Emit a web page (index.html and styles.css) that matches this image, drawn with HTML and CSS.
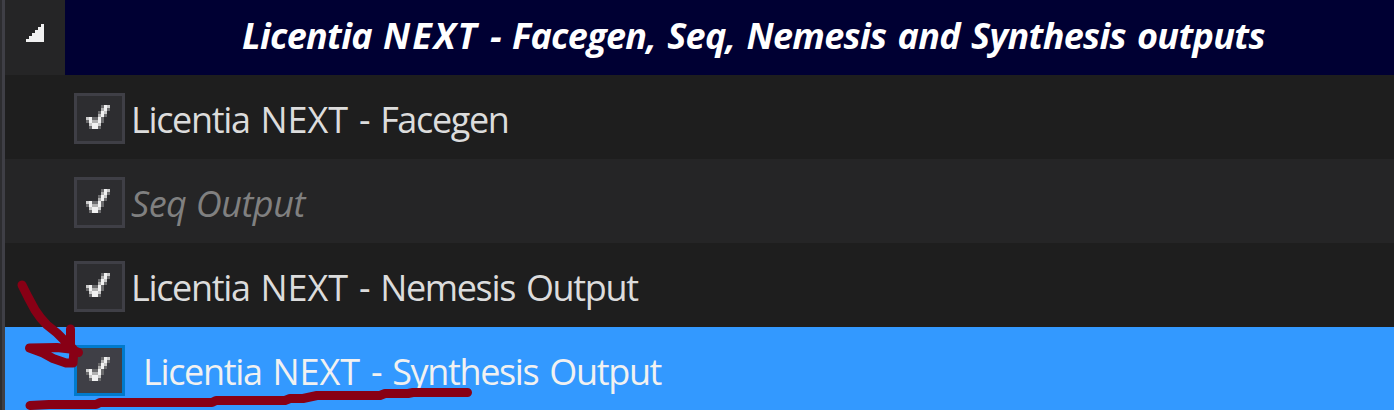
FILE: index.html
```
<!DOCTYPE html>
<html lang="en">
<head>
<meta charset="utf-8">
<title>Outputs</title>
<link rel="stylesheet" href="styles.css">
</head>
<body>
<svg class="defs" width="0" height="0" aria-hidden="true">
  <symbol id="check" viewBox="0 0 8 8" shape-rendering="crispEdges">
    <path fill="#f1f1f1" d="M6 0h1v2h-1zM5 2h1v2h-1zM1 4h1v2h-1zM4 4h1v2h-1zM2 6h2v2h-2z"/>
    <path fill="#c9c9c9" d="M7 0h1v1h-1zM6 2h1v1h-1zM0 4h1v1h-1zM1 6h1v1h-1zM4 6h1v1h-1z"/>
    <path fill="#b0b0b0" d="M5 1h1v1h-1zM4 3h1v1h-1zM2 5h2v1h-2z"/>
    <path fill="#6b6b6d" d="M5 0h1v1h-1zM7 1h1v1h-1zM4 2h1v1h-1zM6 3h1v1h-1zM2 4h2v1h-2zM5 4h1v1h-1zM0 5h1v1h-1zM5 5h1v1h-1zM1 7h1v1h-1zM4 7h1v1h-1z"/>
  </symbol>
</svg>
<main class="list">
  <div class="group">
    <div class="expander"><svg class="triangle" viewBox="0 0 6 6" shape-rendering="crispEdges"><path d="M5 0h1v6h-6v-1h1v-1h1v-1h1v-1h1v-1h1z"/></svg></div>
    <h1 class="title"><span class="label">Licentia <span class="caps">NEXT</span> - Facegen, Seq, Nemesis and Synthesis outputs</span></h1>
  </div>
  <div class="row"><span class="box"><svg class="check"><use href="#check"/></svg></span><span class="label">Licentia <span class="caps">NEXT</span> - Facegen</span></div>
  <div class="row row-alt"><span class="box"><svg class="check"><use href="#check"/></svg></span><span class="label">Seq Output</span></div>
  <div class="row"><span class="box"><svg class="check"><use href="#check"/></svg></span><span class="label">Licentia <span class="caps">NEXT</span> - Nemesis Output</span></div>
  <div class="row row-selected"><span class="box"><svg class="check"><use href="#check"/></svg></span><span class="label">Licentia <span class="caps">NEXT</span> - Synthesis Output</span></div>
</main>
<svg class="ink" viewBox="0 0 1394 410">
  <path d="M22 285L28 297L35 310Q40 318 47 325L57 333L67 343L72 349M70.5 329V346L74 350L73 363H66L53 358.500L43 353L29.500 348L57 347.500L70 349L78.500 352.500"/>
  <path d="M30 405.500L49 404.500H96L100 402.500H212L216 400.500H285L290 398.500H303L317 395.500H380L385 393.500H408L413 392.500H467.500"/>
</svg>
</body>
</html>
```
FILE: styles.css
```
* { box-sizing: border-box; }
body {
  margin: 0;
  height: 410px;
  overflow: hidden;
  background: #1e1e1e;
  font-family: "Open Sans", "Noto Sans", sans-serif;
  font-size: 36px;
}
.defs { position: absolute; }
.list {
  height: 410px;
  overflow: hidden;
  border-left: 3px solid #3f3f46;
  margin-left: 2px;
  box-shadow: -2px 0 #2d2d30;
}
.group { display: flex; height: 75px; }
.expander {
  width: 60px;
  padding: 24px 0 0 21px;
  background: #252526;
}
.triangle { display: block; width: 18px; height: 18px; fill: #f1f1f1; }
.title {
  flex: 1;
  margin: 0;
  padding: 11px 0 0 177px;
  background: #000033;
  color: #fff;
  font-size: 36px;
  font-weight: 700;
  font-style: italic;
}
.label {
  display: block;
  white-space: pre;
  line-height: 49px;
  letter-spacing: -1.35px;
  word-spacing: 3px;
}
.caps { letter-spacing: -0.1px; }
.title .label { letter-spacing: -0.68px; word-spacing: 2.5px; }
.title .caps { letter-spacing: 2px; }
.row {
  display: flex;
  align-items: flex-start;
  height: 84px;
  padding: 18px 0 0 69px;
  color: #dcdcdc;
}
.row .label { margin: 2px 0 0 6px; }
.row-alt { background: #252526; }
.row-alt .label {
  color: #808080;
  font-style: italic;
  letter-spacing: -0.5px;
  word-spacing: 0.6px;
}
.row-selected { background: #3399ff; color: #f1f1f1; }
.row-selected .label { margin-left: 18px; }
.box {
  width: 51px;
  height: 51px;
  border: 3px solid #3f3f46;
  background: #2d2d30;
  padding: 9px;
}
.row-selected .box { background: #3f3f46; border-color: #007acc; }
.check { display: block; width: 24px; height: 24px; }
.ink {
  position: absolute;
  left: 0;
  top: 0;
  width: 1394px;
  height: 410px;
  fill: none;
  stroke: #880015;
  stroke-width: 9;
  stroke-linecap: round;
  stroke-linejoin: round;
}
```
